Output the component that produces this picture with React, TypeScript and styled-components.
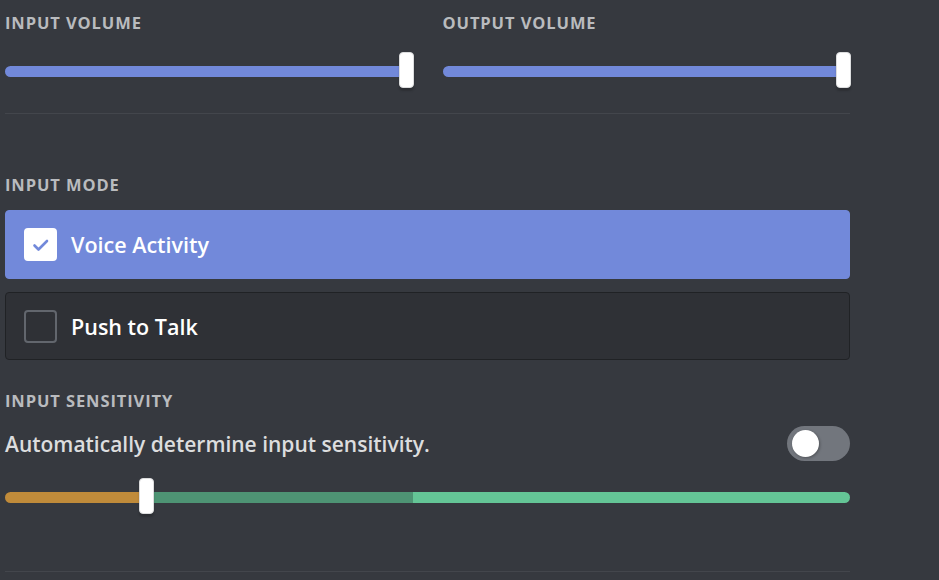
import styled, { createGlobalStyle } from "styled-components";

const GlobalStyle = createGlobalStyle`
    html, body {
        margin: 0;
        padding: 0;
        background: #36393f;
    }
    body {
        font-family: "Open Sans", "Noto Sans", sans-serif;
        -webkit-font-smoothing: antialiased;
    }
`;

const Page = styled.div`
    width: 845px;
    padding: 13px 0 0 5px;
    min-height: 567px;
`;

const VolumeRow = styled.div`
    display: grid;
    grid-template-columns: 1fr 1fr;
    column-gap: 30px;
`;

const Column = styled.div`
    display: flex;
    flex-direction: column;
`;

const Heading = styled.h5<{ $top?: number }>`
    margin: ${(p) => p.$top ?? 0}px 0 0;
    font-size: 16.5px;
    line-height: 20px;
    font-weight: 700;
    letter-spacing: 0.9px;
    text-transform: uppercase;
    color: #b9bbbe;
`;

const SliderBox = styled.div<{ $top: number }>`
    position: relative;
    height: 36px;
    margin-top: ${(p) => p.$top}px;
    display: flex;
    align-items: center;
`;

const Track = styled.div`
    flex: 1;
    height: 11px;
    margin-top: 3px;
    border-radius: 6px;
    overflow: hidden;
    display: flex;
`;

const Fill = styled.div<{ $color: string }>`
    height: 100%;
    background: ${(p) => p.$color};
`;

const Thumb = styled.div`
    position: absolute;
    top: 0;
    width: 15px;
    height: 36px;
    margin-left: -7px;
    box-sizing: border-box;
    border-radius: 4px;
    background: #fff;
    border: 1px solid #dcddde;
    box-shadow: 0 3px 2px rgba(0, 0, 0, 0.18);
`;

const Divider = styled.div<{ $top: number }>`
    height: 1px;
    margin-top: ${(p) => p.$top}px;
    background: #43464c;
`;

const Option = styled.div<{ $active?: boolean; $top: number }>`
    display: flex;
    align-items: center;
    gap: 14px;
    box-sizing: border-box;
    height: ${(p) => (p.$active ? 69 : 68)}px;
    margin-top: ${(p) => p.$top}px;
    padding: 0 18px;
    border-radius: 4px;
    background: ${(p) => (p.$active ? "#7289da" : "#2f3136")};
    border: 1px solid ${(p) => (p.$active ? "#7289da" : "#202225")};
`;

const CheckBox = styled.div<{ $checked?: boolean }>`
    width: 33px;
    height: 33px;
    box-sizing: border-box;
    border-radius: 4px;
    display: flex;
    align-items: center;
    justify-content: center;
    background: ${(p) => (p.$checked ? "#fff" : "transparent")};
    border: 2px solid ${(p) => (p.$checked ? "#fff" : "#62666d")};
`;

const OptionLabel = styled.span`
    font-size: 21.5px;
    font-weight: 600;
    color: #fff;
`;

const SwitchRow = styled.div`
    display: flex;
    align-items: center;
    justify-content: space-between;
    margin-top: 15px;
`;

const SwitchLabel = styled.span`
    font-size: 21px;
    font-weight: 600;
    color: #dcddde;
`;

const Switch = styled.div<{ $on?: boolean }>`
    position: relative;
    width: 63px;
    height: 35px;
    border-radius: 18px;
    background: ${(p) => (p.$on ? "#43b581" : "#72767d")};
`;

const Knob = styled.div`
    position: absolute;
    top: 4px;
    left: 5px;
    width: 27px;
    height: 27px;
    border-radius: 50%;
    background: #fff;
    box-shadow: 1px 1px 3px rgba(0, 0, 0, 0.3);
`;

function CheckMark() {
    return (
        <svg width="20" height="20" viewBox="0 0 20 20">
            <polyline
                points="3.5,10.5 7.5,14.5 16,6"
                fill="none"
                stroke="#7289da"
                strokeWidth="2.6"
                strokeLinecap="round"
                strokeLinejoin="round"
            />
        </svg>
    );
}

function VolumeSlider({ label, value }: { label: string; value: number }) {
    return (
        <Column>
            <Heading>{label}</Heading>
            <SliderBox $top={19}>
                <Track>
                    <Fill $color="#7289da" style={{ width: `${value}%` }} />
                </Track>
                <Thumb style={{ left: `${value}%` }} />
            </SliderBox>
        </Column>
    );
}

const segments = [
    { color: "#c08b3a", width: 16.7 },
    { color: "#4e9474", width: 31.6 },
    { color: "#64c596", width: 51.7 },
];

function App() {
    return (
        <>
            <GlobalStyle />
            <Page>
                <VolumeRow>
                    <VolumeSlider label="Input Volume" value={98.4} />
                    <VolumeSlider label="Output Volume" value={98.3} />
                </VolumeRow>
                <Divider $top={25} />

                <Heading $top={61}>Input Mode</Heading>
                <Option $active $top={15}>
                    <CheckBox $checked>
                        <CheckMark />
                    </CheckBox>
                    <OptionLabel>Voice Activity</OptionLabel>
                </Option>
                <Option $top={13}>
                    <CheckBox />
                    <OptionLabel>Push to Talk</OptionLabel>
                </Option>

                <Heading $top={31}>Input Sensitivity</Heading>
                <SwitchRow>
                    <SwitchLabel>Automatically determine input sensitivity.</SwitchLabel>
                    <Switch>
                        <Knob />
                    </Switch>
                </SwitchRow>
                <SliderBox $top={17}>
                    <Track>
                        {segments.map((s) => (
                            <Fill key={s.color} $color={s.color} style={{ width: `${s.width}%` }} />
                        ))}
                    </Track>
                    <Thumb style={{ left: "16.7%" }} />
                </SliderBox>
                <Divider $top={57} />
            </Page>
        </>
    );
}

export default App;
